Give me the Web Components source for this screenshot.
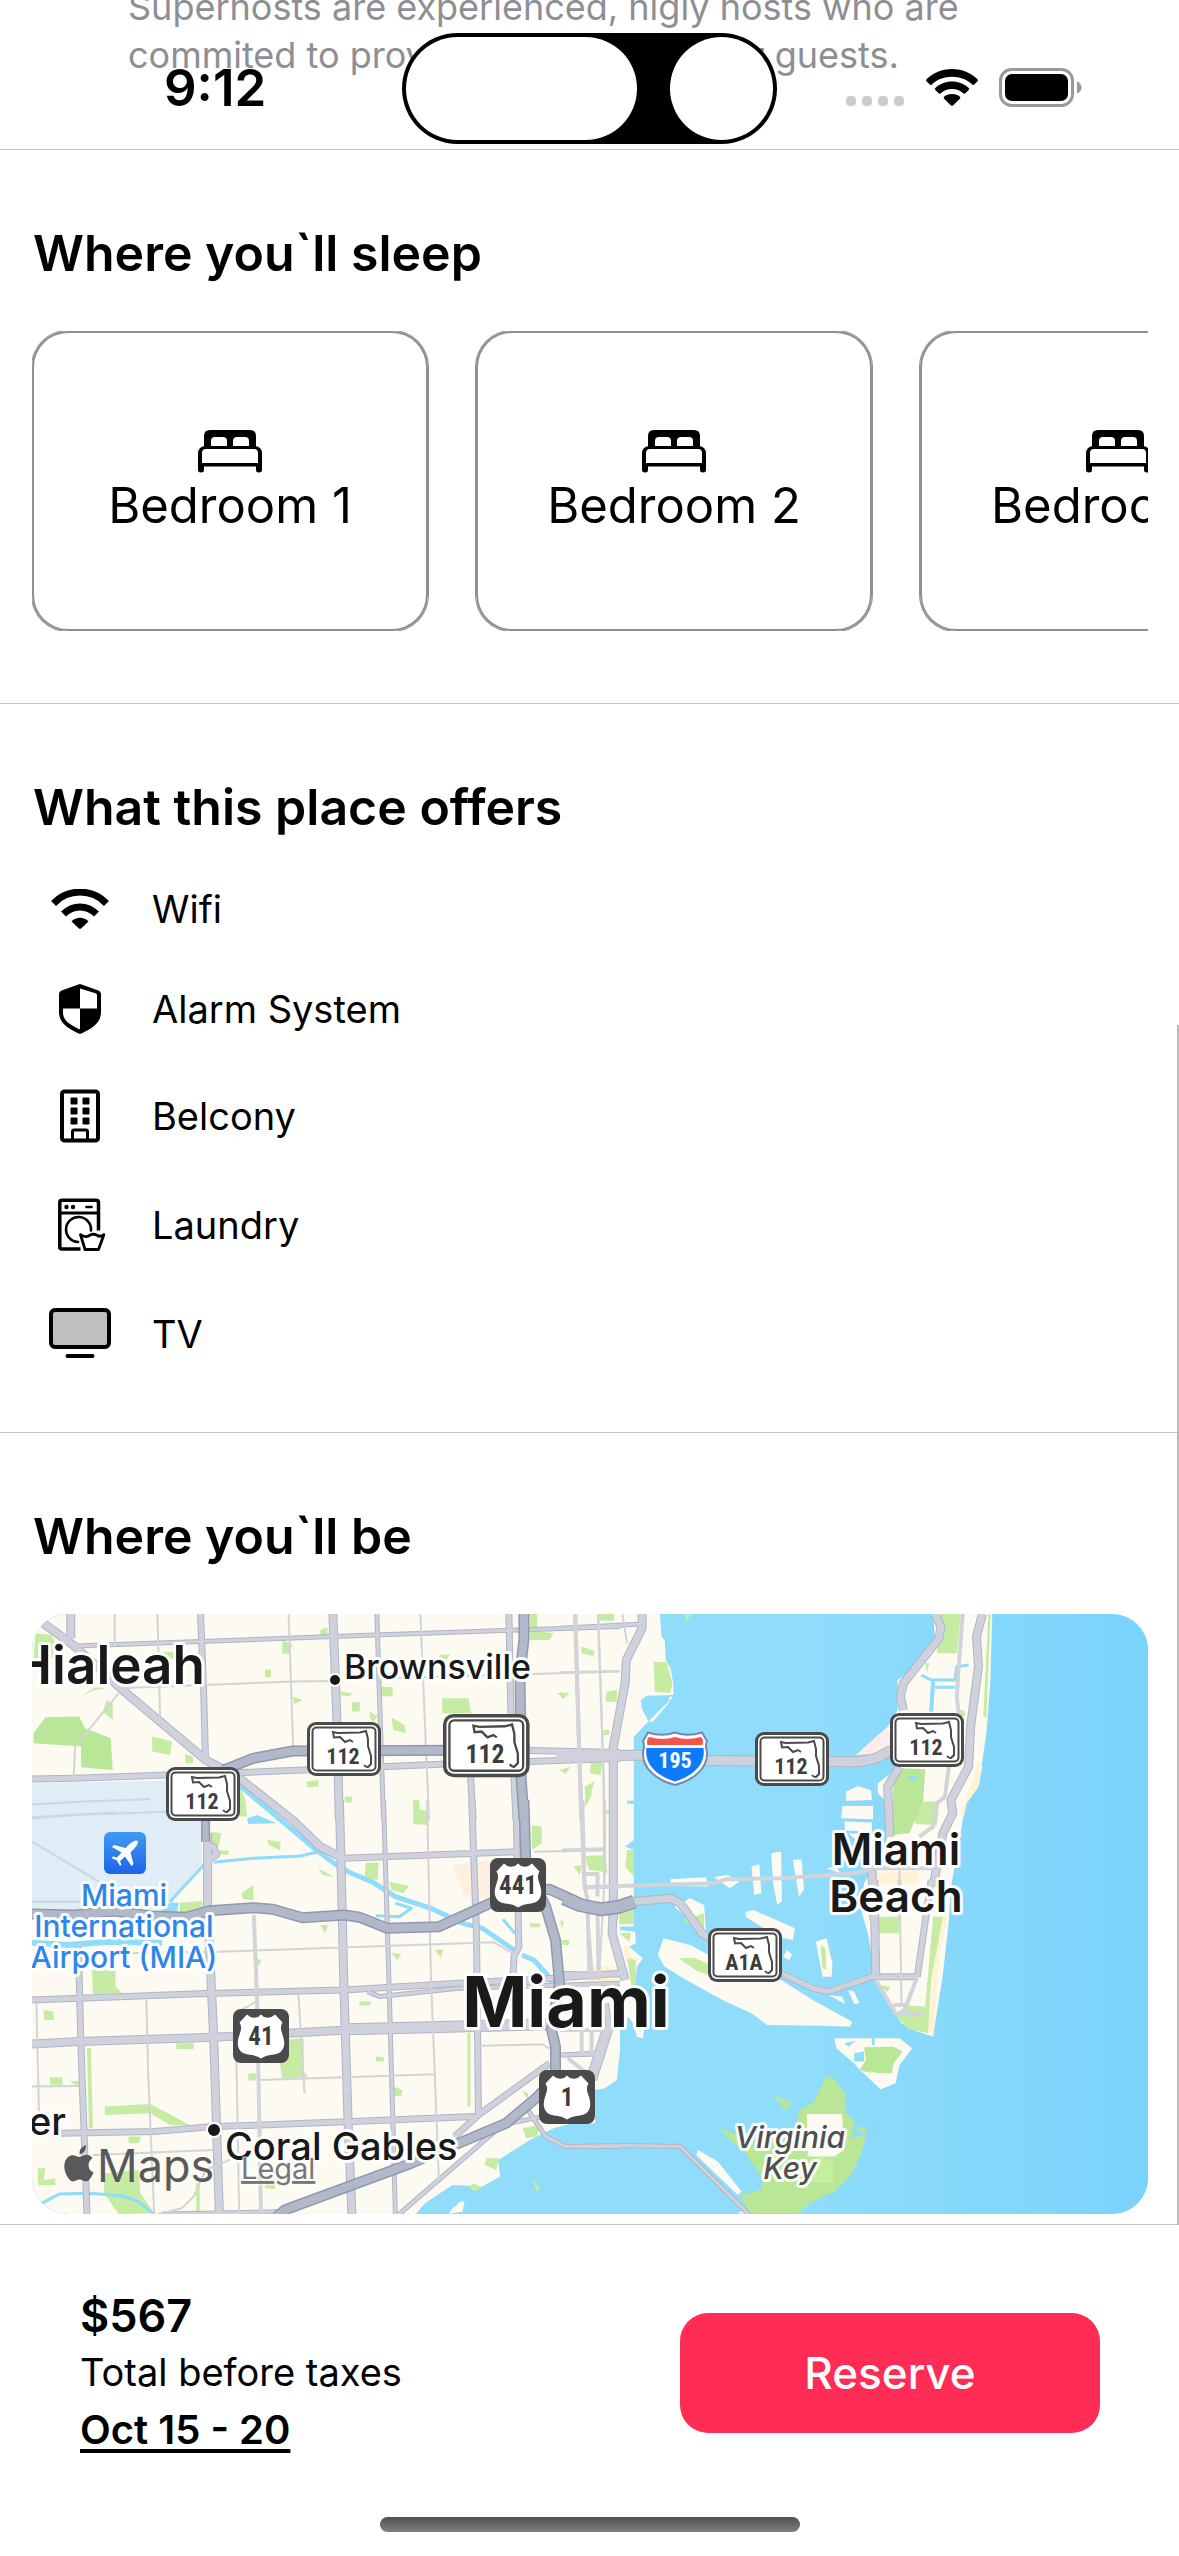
<!DOCTYPE html>
<html lang="en">
<head>
<meta charset="utf-8">
<meta name="viewport" content="width=device-width, initial-scale=1">
<title>Stay details</title>
<style>
  html, body { margin: 0; background: #fff; }
  body { font-family: Inter, "Liberation Sans", sans-serif; color: #000; }
</style>
</head>
<body>
<stay-page>
  <status-bar slot="status" time="9:12"></status-bar>
  <host-note>Superhosts are experienced, higly hosts who are<br>commited to providing great stays for guests.</host-note>
  <stay-section heading="Where you`ll sleep">
    <card-row>
      <bedroom-card>Bedroom 1</bedroom-card>
      <bedroom-card>Bedroom 2</bedroom-card>
      <bedroom-card>Bedroom 3</bedroom-card>
    </card-row>
  </stay-section>
  <stay-section heading="What this place offers">
    <amenity-list>
      <amenity-item icon="wifi">Wifi</amenity-item>
      <amenity-item icon="shield">Alarm System</amenity-item>
      <amenity-item icon="building">Belcony</amenity-item>
      <amenity-item icon="washer">Laundry</amenity-item>
      <amenity-item icon="tv">TV</amenity-item>
    </amenity-list>
  </stay-section>
  <stay-section heading="Where you`ll be" last>
    <area-map></area-map>
  </stay-section>
  <booking-bar slot="footer">
    <span slot="price">$567</span>
    <span slot="note">Total before taxes</span>
    <a slot="dates" href="#dates">Oct 15 - 20</a>
    <span slot="action">Reserve</span>
  </booking-bar>
</stay-page>

<script>
const define = (name, render) => customElements.define(name, class extends HTMLElement {
  constructor() {
    super();
    this.attachShadow({ mode: 'open' });
  }
  connectedCallback() {
    this.shadowRoot.innerHTML = render(this);
  }
});

define('stay-page', () => `
  <style>
    :host { display: flex; flex-direction: column; min-height: 100vh; position: relative; overflow: hidden; }
    main { position: relative; flex: 1; }
    .thumb { position: absolute; right: 0; bottom: 0; width: 2px; height: 1200px; background: #b9b9b9; }
  </style>
  <slot name="status"></slot>
  <main><slot></slot><div class="thumb"></div></main>
  <slot name="footer"></slot>`);

define('status-bar', el => `
  <style>
    :host { position: absolute; z-index: 2; top: 0; left: 0; right: 0; height: 144px; display: grid; grid-template-columns: 1fr 375px 1fr; padding-top: 33px; box-sizing: border-box; }
    .time { padding-left: 164px; padding-top: 24px; font-size: 51px; line-height: 62px; font-weight: 600; }
    .island { height: 111px; border-radius: 56px; background: #000; display: flex; justify-content: space-between; padding: 4px; box-sizing: border-box; }
    .wide { width: 231px; border-radius: 52px; background: #fff; }
    .round { width: 103px; border-radius: 52px; background: #fff; }
    .right { display: flex; justify-content: flex-end; padding: 35px 97px 0 0; }
  </style>
  <div class="time">${el.getAttribute('time')}</div>
  <div class="island"><div class="wide"></div><div class="round"></div></div>
  <div class="right">
    <svg width="236" height="40" viewBox="0 0 236 40" aria-hidden="true">
      <g fill="#ccc"><rect x="0" y="28" width="10" height="10" rx="4"/><rect x="16" y="28" width="10" height="10" rx="4"/><rect x="32" y="28" width="10" height="10" rx="4"/><rect x="48" y="28" width="10" height="10" rx="4"/></g>
      <path d="M106 1C96 1 87 4.800 80.500 11.200Q79.500 12.200 80.500 13.200L83.800 16.500Q84.800 17.500 85.800 16.500C91 11.600 98 8.800 106 8.800S121 11.600 126.200 16.500Q127.200 17.500 128.200 16.500L131.500 13.200Q132.500 12.200 131.500 11.200C125 4.800 116 1 106 1ZM106 13.500C99.500 13.500 93.500 16 89.300 19.900Q88.300 20.900 89.300 21.900L92.700 25.200Q93.700 26.200 94.700 25.200C97.700 22.700 101.600 21.100 106 21.100S114.300 22.700 117.300 25.200Q118.300 26.200 119.300 25.200L122.700 21.900Q123.700 20.900 122.700 19.900C118.500 16 112.500 13.500 106 13.500ZM106 26C102.800 26 100 27.100 98.100 28.700Q97.100 29.700 98.100 30.700L105 37.500Q106 38.400 107 37.500L113.900 30.700Q114.900 29.700 113.900 28.700C112 27.100 109.200 26 106 26Z"/>
      <rect x="154.500" y="1.500" width="72" height="36" rx="11" fill="none" stroke="#999" stroke-width="3"/>
      <rect x="159" y="6" width="63" height="27" rx="7"/>
      <path d="M231 13.500C237 15.500 237 23.500 231 25.500Z" fill="#999"/>
    </svg>
  </div>`);

define('host-note', () => `
  <style>
    :host { display: block; margin-top: -17px; padding: 0 96px 70px 128px; border-bottom: 1px solid #c2c2c2; font-size: 36px; line-height: 48px; color: #8e8e93; }
  </style><slot></slot>`);

define('stay-section', el => `
  <style>
    :host { display: block; padding: 73px 31px 72px 32px; border-bottom: 1px solid #c2c2c2; }
    :host([last]) { padding-bottom: 10px; }
    h2 { margin: 0 0 48px; padding-left: 1px; font-size: 50px; line-height: 60px; font-weight: 600; }
  </style>
  <h2>${el.getAttribute('heading')}</h2><slot></slot>`);

define('card-row', () => `
  <style>:host { display: flex; gap: 48px; overflow: hidden; }</style><slot></slot>`);

define('bedroom-card', () => `
  <style>
    :host { flex: 0 0 396px; height: 300px; display: flex; flex-direction: column; align-items: center; justify-content: center; border-radius: 36px; box-sizing: border-box; padding-top: 6px;
      box-shadow: inset 0 0 0 2px #8e8e93, 0 0 0 1px #8e8e93; font-size: 49px; line-height: 66px; }
  </style>
  <svg width="64" height="43" viewBox="0 0 64 43" aria-hidden="true">
    <path fill-rule="evenodd" d="M6 17V6Q6 0 12 0H52Q58 0 58 6V17ZM13 16H29V11Q29 7 25 7H17Q13 7 13 11ZM35 16H51V11Q51 7 47 7H39Q35 7 35 11Z"/>
    <path fill-rule="evenodd" d="M0 24Q0 16 8 16H56Q64 16 64 24V40Q64 42.500 61 42.500T58 40V36.500H6V40Q6 42.500 3 42.500T0 40ZM4 33H60V23Q60 19 56 19H8Q4 19 4 23Z"/>
  </svg>
  <slot></slot>`);

define('amenity-list', () => `
  <style>:host { display: flex; flex-direction: column; gap: 55px; margin-top: 52px; }</style><slot></slot>`);

const icons = {
  wifi: `<svg width="58" height="40" viewBox="0 0 58 40"><g fill="none" stroke="#000" stroke-width="7"><path d="M2.500 14.500C17-.700 41-.700 55.500 14.500"/><path d="M12.500 25C22 15.500 36 15.500 45.500 25"/></g><path d="M20.500 32.500C25 27.500 33 27.500 37.500 32.500L30 39.500Q29 40.400 28 39.500Z"/></svg>`,
  shield: `<svg width="42" height="50" viewBox="0 0 42 50"><path fill-rule="evenodd" d="M19.500.500Q21-.300 22.500.500L39.500 6.500Q42 7.500 42 10V28C42 39 33 44.500 22.500 49.500Q21 50.200 19.500 49.500C9 44.500 0 39 0 28V10Q0 7.500 2.500 6.500ZM21 4.500V24.500H38V11Q38 9.700 36.500 9.200ZM21 24.500H4V28C4 37 11 40.500 21 45.500Z"/></svg>`,
  building: `<svg width="40" height="54" viewBox="0 0 40 53"><rect x="2" y="2" width="36" height="49" rx="2.500" fill="none" stroke="#000" stroke-width="4"/><g><rect x="10.500" y="8" width="7" height="7" rx="1"/><rect x="22.500" y="8" width="7" height="7" rx="1"/><rect x="10.500" y="18" width="7" height="7" rx="1"/><rect x="22.500" y="18" width="7" height="7" rx="1"/><rect x="10.500" y="28" width="7" height="7" rx="1"/><rect x="22.500" y="28" width="7" height="7" rx="1"/></g><path d="M12.500 50V42Q12.500 40.500 14 40.500H26Q27.500 40.500 27.500 42V50" fill="none" stroke="#000" stroke-width="3"/></svg>`,
  washer: `<svg width="50" height="54" viewBox="-3 0 50 53"><g fill="none" stroke="#000" stroke-width="3.500" stroke-linecap="round" stroke-linejoin="round"><path stroke-linecap="butt" d="M22.500 50.500H4Q1.800 50.500 1.800 48.500V4Q1.800 1.800 4 1.800H38Q40.500 1.800 40.500 4V32"/><path d="M2 14.500H40.500" stroke-width="3"/><path d="M20 43.500A12.500 12.500 0 1 1 33 32" stroke-width="2.600"/><path d="M22.500 36L27 51H40.500L46 36Q42.500 39 39 36.800Q34.500 34.500 31 37.200Q27 39.500 22.500 36Z" stroke-width="2.800"/><path d="M28.500 8.500H33.500" stroke-width="2.600"/></g><circle cx="8.500" cy="8.500" r="2.200"/><circle cx="15" cy="8.500" r="2.200"/></svg>`,
  tv: `<svg width="62" height="53" viewBox="0 0 62 53"><rect x="2" y="3" width="58" height="37" rx="4" fill="#bfbfbf" stroke="#000" stroke-width="4"/><rect x="16.500" y="47" width="29" height="4" rx="2"/></svg>`
};
define('amenity-item', el => `
  <style>
    :host { display: flex; align-items: center; gap: 24px; font-size: 38px; line-height: 40px; }
    .icon { flex: 0 0 96px; display: flex; justify-content: center; }
    svg { display: block; }
  </style>
  <span class="icon" aria-hidden="true">${icons[el.getAttribute('icon')]}</span><span><slot></slot></span>`);

define('booking-bar', () => `
  <style>
    :host { display: flex; flex-direction: column; align-items: center; background: #fff; padding: 62px 79px 24px 80px; }
    .row { align-self: stretch; display: flex; align-items: center; justify-content: space-between; margin-bottom: 59px; }
    .info { display: flex; flex-direction: column; align-items: flex-start; font-size: 38px; line-height: 57px; }
    .price { font-size: 45px; font-weight: 600; }
    ::slotted(a) { color: #000; font-size: 40px; font-weight: 600; text-decoration: underline; text-decoration-thickness: 4px; text-underline-offset: 5px; text-decoration-skip-ink: none; }
    button { width: 420px; height: 120px; border: 0; border-radius: 28px; background: #ff2d55; color: #fff; font-family: inherit; font-size: 44px; font-weight: 500; }
    .home { width: 420px; height: 15px; border-radius: 8px; background: linear-gradient(#505050, #808080); }
  </style>
  <div class="row">
    <div class="info"><span class="price"><slot name="price"></slot></span><slot name="note"></slot><slot name="dates"></slot></div>
    <button type="button"><slot name="action"></slot></button>
  </div>
  <div class="home"></div>`);

/* ---- Map data: four survey sheets, each with its own origin and unit ---- */
const sheets = {
  nw: [0, 1400, .3954, .3333], sw: [0, 1800, .3954, .3333],
  ne: [560, 1600, .3948, .3333], se: [560, 1880, .3948, .3333]
};
const trace = (sheet, pts, close) => {
  const [ox, oy, sx, sy] = sheets[sheet];
  return 'M' + pts.split(' ').map(p => {
    const [x, y] = p.split(',').map(Number);
    return (ox + x * sx).toFixed(1) + ' ' + (oy + y * sy).toFixed(1);
  }).join('L') + (close ? 'Z' : '');
};
const area = (sheet, fill, list) => `<path fill="${fill}" d="${list.split('|').map(s => trace(sheet, s.trim(), true)).join('')}"/>`;
const line = (sheet, color, width, list) => `<path fill="none" stroke-linejoin="round" stroke="${color}" stroke-width="${width}" d="${list.split('|').map(s => trace(sheet, s.trim())).join('')}"/>`;

const LAND = '#fcfaf1', GREEN = '#c5eca2', PARK = '#b9e697', SEA = '#8fdcfb', SAND = '#fff3d4';
const areas = [
  area('sw', LAND, '1510,-600 1568,-700 1568,750 1560,840 1530,865 1505,870 1505,970 1440,972 1400,985 1340,1020 1260,1080 1265,1130 1220,1160 1145,1155 1100,1190 1075,1210 1045,1250 60,1250 60,-600'),
  area('ne', LAND, '-40,30 253,42 257,110 265,120 268,180 280,205 287,250 287,285 220,287 205,300 207,325 225,365 235,365 275,310 277,290 287,290 215,375 187,410 187,720 165,740 187,750 187,980 -40,980'),
  area('se', LAND, '-40,100 187,100 187,133 150,135 150,150 190,155 192,190 175,200 210,235 195,260 190,320 220,380 210,475 195,470 185,430 172,410 165,440 145,450 140,590 95,620 -40,640'),
  area('ne', LAND, '945,42 1095,42 1090,250 1080,400 1060,560 1030,610 1020,660 1010,740 990,860 985,960 970,1120 945,1310 905,1295 865,1270 800,1140 780,1000 765,940 770,850 810,780 835,690 830,610 805,580 805,550 850,510 840,440 750,465 830,380 855,330 855,240 905,200 905,180 950,120 | 725,575 755,558 788,572 790,600 725,603 | 715,618 793,618 793,658 712,655 | 720,665 790,668 790,695 722,692 | 730,700 800,705 800,740 770,740 | 485,800 505,793 510,880 492,885 | 535,760 560,755 562,905 550,915 540,850 | 590,780 612,778 618,870 605,890 | 280,838 370,832 375,860 280,858 | 390,832 420,825 460,840 430,865 | 675,805 700,798 710,820'),
  area('ne', SAND, '1062,480 1070,500 1060,560 1030,610 1020,660 1015,640 1040,560 | 803,818 908,815 908,850 803,850'),
  area('ne', '#ffeceb', '750,465 830,380 840,440 800,462'),
  area('ne', GREEN, '965,42 1015,42 1005,160 955,160 | 895,605 960,605 955,675 900,672 | 925,190 935,190 930,220 | 1085,42 1091,42 1080,350 1072,350 | 237,185 270,187 285,250 280,278 240,275 | 95,42 135,42 135,62 97,60 | 55,140 88,155 80,165 55,160 | 0,275 20,285 5,297 | 118,275 145,270 140,305 115,305 | 65,768 115,765 120,820 70,800 | 170,750 187,750 187,830 165,800 | 62,560 88,545 75,590 65,598 | 80,500 105,500 100,525 | 315,42 333,45 320,62 | 35,800 55,795 50,825 | 1010,330 1025,332 1025,350 1010,345 | 110,390 125,390 125,405 110,405 | 115,630 125,630 125,640 115,640'),
  area('ne', PARK, '845,540 865,505 925,508 920,600 885,700 840,705'),
  area('ne', SEA, '880,528 905,530 900,545 888,540'),
  area('se', LAND, '290,80 330,55 365,75 370,155 350,145 | 470,95 490,90 595,145 590,180 550,170 470,110 | 575,210 588,225 580,240 565,230 | 648,185 675,175 690,250 688,290 665,290 | 248,225 262,175 330,195 400,240 560,300 640,360 740,425 735,440 665,437 525,435 485,400 420,365 320,300 265,260 | 680,345 715,350 722,372 | 730,330 745,335 758,370 745,372 | 695,475 860,475 892,505 860,555 850,610 812,628 760,570 745,550 700,505 | 350,810 400,845 460,935 450,945 345,825 | 450,1001 465,990 490,1001'),
  area('se', SAND, '80,258 150,260 145,305 70,300 | 160,195 175,198 178,230 210,240 165,238 | 960,110 980,110 960,230 945,470 930,450 945,300'),
  area('se', GREEN, '310,120 365,100 365,148 340,140 | 660,195 672,205 675,270 665,265 | 300,235 340,233 390,260 400,290 350,275 | 945,110 970,110 940,300 932,460 880,445 850,405 875,375 925,380 | 805,110 860,110 858,160 808,160 | 150,80 187,75 187,133 150,133 | 170,235 192,240 192,320 180,315 | 150,160 180,158 175,185 | 0,120 10,125 5,150 | 805,315 835,320 830,335'),
  area('se', PARK, '675,590 690,592 722,640 725,700 750,730 735,755 775,735 770,800 740,880 695,935 640,965 600,1001 480,1001 455,945 510,930 515,900 470,820 440,790 400,742 440,760 500,790 600,740 605,690 640,670 | 540,645 588,670 570,690 | 770,502 845,500 868,515 845,550 840,580 790,580 758,570 775,540'),
  area('se', '#c4f09c', '600,860 660,830 695,850 690,910 605,905'),
  area('se', LAND, '625,702 715,702 718,810 695,830 628,830 | 785,575 830,585 815,600 800,595'),
  area('se', SEA, '720,490 750,482 730,500 | 745,520 770,515 770,545 745,545 | 790,475 797,475 797,495 790,495 | 660,747 672,747 672,756 660,756 | 755,745 735,775 770,765'),
  area('nw', PARK, '115,952 200,950 215,985 280,1015 285,1110 205,1102 205,1040 85,1030 85,1000'),
  area('nw', GREEN, '90,700 130,705 150,750 130,775 85,775 | 385,1010 435,1025 430,1065 385,1055 | 715,720 740,735 730,762 713,760 | 1118,895 1185,895 1192,940 1118,940 | 1340,642 1358,642 1358,695 1400,700 1390,720 1340,720 | 1510,642 1553,642 1553,660 1515,662 | 965,860 993,862 993,890 965,888 | 990,952 1022,975 1028,1000 995,990 | 468,1062 488,1070 488,1090 470,1090 | 890,907 910,907 910,935 890,935 | 670,810 685,808 685,832 670,832 | 860,875 890,880 885,890 862,886 | 810,690 828,682 828,705 810,705 | 1110,765 1138,763 1130,778 1112,778 | 1470,740 1505,755 1500,768 1472,760 | 1410,880 1440,878 1425,897 | 1530,890 1560,870 1560,908 | 775,1145 805,1140 805,1160 778,1162 | 872,1190 890,1190 890,1208 872,1208 | 1045,1200 1060,1200 1062,1230 1085,1232 1083,1275 1045,1272 | 1480,1195 1500,1145 1495,1190 1478,1225 | 1495,1085 1522,1080 1520,1125 1492,1120 | 608,1160 620,1200 625,1250 605,1250 | 1415,1110 1443,1100 1430,1122 | 740,890 765,900 745,912 | 415,755 443,757 440,775 418,778 | 205,890 240,862 270,865 235,872 | 270,900 285,910 285,960 260,935 | 935,935 955,950 945,965 935,955'),
  area('sw', '#e0ecf6', '81,-50 510,-60 510,190 430,310 420,332 81,332'),
  area('sw', '#fdf0e0', '1145,195 1240,180 1240,290 1175,290'),
  area('sw', SAND, '1485,500 1568,498 1568,545 1480,545 | 165,430 185,430 185,450 170,448'),
  area('sw', SEA, '395,350 430,308 452,308 445,352 | 625,55 650,45 700,70 628,72'),
  area('sw', GREEN, '455,308 510,303 515,330 480,350 455,352 | 233,510 292,512 292,560 310,580 235,582 | 715,720 768,715 768,815 780,832 713,835 708,790 | 265,920 380,912 480,975 430,975 380,940 265,945 | 263,1120 350,1110 355,1180 390,1240 300,1242 263,1180 | 220,745 230,745 235,985 225,985 | 1182,700 1190,700 1190,920 1182,920 | 445,730 490,730 490,747 447,747 | 1345,75 1370,80 1370,130 1345,150 | 1485,170 1530,170 1530,215 1490,210 | 925,188 958,188 955,240 922,235 | 985,245 1035,258 1020,280 990,270 | 610,280 640,255 642,300 615,298 | 125,832 158,832 158,855 128,855 | 175,845 200,843 198,858 | 810,375 830,375 822,400 | 535,95 560,100 550,150 580,152 575,165 537,160 | 645,475 660,480 655,500 | 1100,450 1120,448 1115,475 | 990,460 1015,462 1005,480 | 908,605 938,605 935,617 910,617 | 995,860 1018,870 1015,890 998,888 | 628,820 648,820 648,842 628,842 | 1322,985 1362,975 1360,1010 1330,1015 | 95,1105 115,1105 110,1140 140,1135 140,1155 97,1155 | 495,1150 505,1150 505,1235 497,1235 | 670,1140 697,1145 695,1168 670,1165 | 110,630 135,635 137,660 112,660 | 325,1010 357,1010 350,1030 325,1030 | 1375,370 1395,362 1393,385 | 1420,420 1440,420 1438,435 1420,434 | 950,770 972,772 970,785 952,785 | 1320,870 1335,880 1335,900 | 675,120 710,125 708,150 680,135 | 805,205 845,230 815,225 | 1340,370 1365,370 1365,382 1342,382 | 1230,1075 1262,1075 1255,1110 1225,1095 | 1185,1160 1200,1150 1218,1165 1200,1175 | 1345,1135 1365,1165 1360,1180 | 1450,200 1470,200 1468,220'),
  area('sw', LAND, '1165,1205 1175,1205 1170,1235 1135,1242 1145,1225'),
  line('nw', '#c9d8e4', 2, '81,1214 210,1205 380,1198 | 81,1252 290,1238'),
  line('sw', '#c9d8e4', 2, '81,55 190,45 420,35 | 81,125 250,245 | 81,305 205,305'),
  line('sw', SEA, 5, '600,-50 800,150 845,190 880,215 940,245 1000,290 1090,325 1170,370 1220,385 1300,450 | 1320,465 1350,480 1385,525 1400,555'),
  line('sw', SEA, 3, '540,187 640,175 760,168 805,155 | 515,195 430,305 | 950,347 1010,350 1040,325 1000,310 | 105,1210 150,1182 230,1180 310,1188 350,1205 392,1245 | 1272,358 1302,400'),
  line('sw', SEA, 6, '81,428 170,435 280,425 410,428'),
  line('ne', SEA, 3, '915,225 940,240 1000,240 1005,200 1035,195 | 950,262 1000,262 | 170,607 190,607'),
  line('ne', SEA, 4, '945,245 940,335')
].join('');

/* class: [inner colour, casing colour] */
const kinds = { t: ['#d3d3da', null], m: ['#cfd1dc', '#b0b6c6'], h: ['#b1b8c9', '#8f98ae'] };
const roads = [
  ['nw','t',2,'300,865 740,845 850,843 | 960,835 1568,815 | 290,642 290,740 | 398,642 405,950 | 730,642 742,1060 | 1063,642 1085,1260 | 1512,642 1530,1260 | 300,880 190,1040 186,1140'],
  ['sw','t',2,'1080,0 1090,540 1100,830 1110,1140 | 1350,155 1530,150 | 320,460 555,455 1250,427 1310,470 | 660,840 1100,823 | 81,860 200,858 | 235,1065 540,1050 | 370,600 375,830 390,1242 | 598,780 605,1242 | 755,585 770,880 | 92,610 100,1000 | 1475,0 1480,230 1500,540 | 1530,0 1530,210 1515,540 | 1475,222 1510,222 | 460,1225 490,1190 520,1110 600,1070 | 400,1242 460,1225 | 1200,738 1370,733 1390,745 | 610,630 655,600'],
  ['ne','t',2,'97,42 110,500 112,850 | 0,217 150,213 | 158,42 170,130 | 860,800 860,960'],
  ['se','t',2,'860,0 865,370 | 20,320 100,315'],
  ['nw','t',4,'1455,642 1470,1260'],
  ['sw','t',4,'642,345 650,590 660,1242 | 1480,262 1568,260'],
  ['ne','t',4,'38,42 50,500 62,860 70,900 | 1020,42 1010,200 1005,290 1010,340 | 985,500 975,590 955,610 945,680 910,710 | 60,862 150,858 390,850 420,838 560,835 750,820 790,805 960,805 | 5,752 110,748 | 62,822 95,822 95,890'],
  ['se','t',4,'70,90 75,300 | 95,100 98,300 | 800,300 850,400 920,402 | 905,290 870,400 | 845,375 880,375 | 0,450 120,450 | 20,535 90,600 | 55,450 55,520 | 80,450 80,520 | 860,0 860,100'],
  ['nw','m',5,'190,738 840,710 1310,690 1568,680 | 953,642 970,1260'],
  ['ne','m',5,'0,85 208,72'],
  ['sw','m',5,'970,0 985,600 1000,1242 | 930,575 960,590 1160,565 1568,550 | 1425,765 1510,762 | 1370,950 1270,975 1010,1242 | 1335,930 1380,1010 1430,1040 1568,1040 | 410,1242 720,1235'],
  ['se','m',5,'0,280 160,285 | 0,525 90,520 | 10,800 170,797 305,800 480,1005'],
  ['nw','m',7,'81,1137 190,1135 420,1125 610,1118 1130,1092 1340,1085 1568,1075 | 507,642 515,870 520,1090 | 1190,1130 1197,1260 | 1287,642 1292,940 1305,1260 | 1340,1052 1568,1058'],
  ['sw','m',7,'520,130 540,140 548,165 525,180 | 1193,0 1205,400 1210,940 | 1305,0 1312,440 1300,470 1298,520 | 870,175 1310,155 | 81,600 200,595 540,580 870,570 1160,550 1400,535 1568,520 | 155,1000 390,995 540,980 660,975 890,965 1200,950 | 198,440 205,750 220,1242 | 1390,790 1210,945 1150,1010 | 1530,690 1495,820'],
  ['se','m',7,'560,280 640,325 680,335 790,290 905,290 | 940,0 905,290 | 115,370 125,450 85,600'],
  ['nw','m',9,'179,642 179,715 | 110,670 190,740 310,870 520,1080 600,1130 750,1270 | 842,642 852,960 858,1260'],
  ['sw','m',9,'740,60 810,140 860,170 | 858,0 862,160 870,570 880,960 890,1242 | 525,100 525,320 540,700 555,1242 | 81,732 200,725 540,712 880,690'],
  ['sw','m',12,'880,688 1160,680 1400,672'],
  ['ne','m',9,'208,42 208,85 168,180 165,250 135,440 135,860 135,960 | 950,42 965,80 960,115 870,250 862,290 870,330 | 1070,42 1055,110 1060,200 1040,380 1035,500 990,600 995,640 970,700 945,860 | 860,500 830,560 835,710 | 790,800 795,960'],
  ['se','m',9,'795,0 800,290 | 135,90 132,160 165,300 | 180,65 280,55 305,70 360,160 390,180'],
  ['ne','m',11,'-10,470 208,465 230,480 760,485 800,475 840,450'],
  ['sw','h',9,'520,60 520,125'],
  ['nw','h',11,'565,1110 640,1075 740,1053 1340,1050'],
  ['nw','h',11,'1325,642 1325,720 1315,820 1318,1130 1325,1260'],
  ['sw','h',11,'1325,0 1330,200 1380,320 1405,420 1415,550 1395,690 1405,740 1405,830 1360,890 1280,970 1160,1030 1040,1090 720,1230 700,1250'],
  ['sw','h',11,'81,342 190,345 290,333 380,348 470,352 530,332 640,323 690,328 765,353 870,345 910,352 980,385 1110,380 1240,310 1310,275 1390,268 1440,295 1500,328'],
  ['se','h',14,'10,55 50,75 105,88 150,80 188,65']
];
const casing = roads.filter(r => r[1] === 'm').map(([s, k, w, p]) => line(s, kinds[k][1], w, p)).join('');
const fillRoads = roads.filter(r => r[1] !== 'h').map(([s, k, w, p]) => line(s, kinds[k][0], k === 'm' ? w - 2 : w, p)).join('');
const highways = roads.filter(r => r[1] === 'h').map(([s, k, w, p]) => line(s, kinds.h[1], w, p)).join('')
  + roads.filter(r => r[1] === 'h').map(([s, k, w, p]) => line(s, kinds.h[0], w - 3, p)).join('');

const stateRoad = (x, y, label, scale = 1) => `
  <g transform="translate(${x} ${y}) scale(${scale})">
    <rect width="74" height="54" rx="9" fill="#4a4a4a"/><rect x="3" y="3" width="68" height="48" rx="6" fill="#fff"/>
    <rect x="5.500" y="5.500" width="63" height="43" rx="4" fill="#fff" stroke="#4a4a4a" stroke-width="2"/>
    <path d="M46 20L43 18L38 20L33 15L27 15.500L26 10L31 11L53 10.500L59 9L61 17V24L64 34V42L61 45Q59 45.500 57 43" fill="none" stroke="#4a4a4a" stroke-width="2"/>
    <text class="road" x="36" y="42" font-size="22">${label}</text>
  </g>`;
const usRoute = (x, y, label) => `
  <g transform="translate(${x} ${y})">
    <rect width="56" height="54" rx="8" fill="#4a4a4a"/>
    <path d="M14 5.500Q18 9.500 22.500 8.500Q26 8 28 5.500Q30 8 33.500 8.500Q38 9.500 42 5.500L49.500 13.500Q46.500 18 49 24Q52 32 51 37Q49.500 44.500 41 45.500Q33 46 28 49.500Q23 46 15 45.500Q6.500 44.500 5 37Q4 32 7 24Q9.500 18 6.500 13.500Z" fill="#fff"/>
    <text class="road" x="28" y="36" font-size="25">${label}</text>
  </g>`;

define('area-map', () => `
  <style>
    :host { display: block; height: 600px; border-radius: 36px; overflow: hidden; background: ${SEA}; }
    svg { display: block; width: 100%; height: 100%; }
    text { font-family: Inter, "Liberation Sans", sans-serif; }
    .place text { fill: #191919; stroke: #fffffff0; stroke-width: 6px; stroke-linejoin: round; paint-order: stroke; font-weight: 500; }
    text.road { font-family: "Liberation Sans Narrow", "Roboto Condensed", Roboto, sans-serif; font-weight: 700; text-anchor: middle; fill: #3d3d3d; }
    .mid { text-anchor: middle; }
    a text { text-decoration: underline; }
  </style>
  <svg viewBox="32 1614 1116 600" preserveAspectRatio="xMidYMid slice" role="img" aria-label="Map of Miami">
    <defs>
      <linearGradient id="sea" x1="0" x2="1"><stop offset=".7" stop-color="#8fdcfb"/><stop offset="1" stop-color="#7ad3fc"/></linearGradient>
      <linearGradient id="air" x1="0" x2="0" y1="0" y2="1"><stop offset="0" stop-color="#3f9bf5"/><stop offset="1" stop-color="#1f63ea"/></linearGradient>
    </defs>
    <rect x="32" y="1614" width="1116" height="600" fill="url(#sea)"/>
    ${areas}${casing}${fillRoads}${highways}
    ${stateRoad(166, 1767, '112')}${stateRoad(307, 1722, '112')}${stateRoad(443, 1714, '112', 1.17)}
    ${stateRoad(755, 1732, '112')}${stateRoad(890, 1713, '112')}${stateRoad(708, 1928, 'A1A')}
    ${usRoute(490, 1858, '441')}${usRoute(233, 2009, '41')}${usRoute(539, 2070, '1')}
    <g transform="translate(642 1732)">
      <path d="M6 .500Q20 5 33 .500Q46 5 60 .500L65 9Q63 14 65 20C66 36 52 48 33 53C14 48 0 36 1 20Q3 14 1 9Z" fill="#fff" stroke="#7488b4" stroke-width="2"/>
      <path d="M5.500 13Q4 6 7.500 5Q21 9 33 5Q45 9 58.500 5Q62 6 60.500 13Z" fill="#f5544b"/>
      <path d="M4.500 16H61.500C64 33 50 44 33 49.500C16 44 2 33 4.500 16Z" fill="#0e7bff"/>
      <text class="road" x="33" y="36" font-size="22" style="fill:#fff">195</text>
    </g>
    <rect x="104" y="1832" width="42" height="42" rx="6" fill="url(#air)"/>
    <path d="M137.500 1841C139 1843 136 1847 130.500 1852.500L133.500 1864L131.500 1866L125 1856.500L120 1861L121.500 1864.500L120 1866L117 1860.500L111.500 1858L113 1856.500L117 1857.500L121.500 1852.500L112 1847L114 1845L125.500 1848C131 1842.500 135.500 1839.500 137.500 1841Z" fill="#fff"/>
    <g class="place">
      <text x="205" y="1684" font-size="53" text-anchor="end" style="font-weight:600">Hialeah</text>
      <text x="344" y="1679" font-size="34">Brownsville</text>
      <text x="225" y="2160" font-size="38">Coral Gables</text>
      <text x="29" y="2135" font-size="38">er</text>
      <g class="mid">
        <text x="566" y="2027" font-size="70" style="font-weight:700">Miami</text>
        <text x="896" y="1865" font-size="44" style="font-weight:600">Miami</text>
        <text x="896" y="1912" font-size="44" style="font-weight:600">Beach</text>
      </g>
      <g class="mid">
        <text x="124" y="1906" font-size="30" style="fill:#2e86ea">Miami</text>
        <text x="124" y="1937" font-size="30" style="fill:#2e86ea">International</text>
        <text x="124" y="1968" font-size="30" style="fill:#2e86ea">Airport (MIA)</text>
        <text x="790" y="2148" font-size="30" font-style="italic" style="fill:#505050">Virginia</text>
        <text x="790" y="2179" font-size="30" font-style="italic" style="fill:#505050">Key</text>
      </g>
    </g>
    <g fill="#191919" stroke="#fff" stroke-width="2"><circle cx="335" cy="1680" r="6"/><circle cx="214" cy="2130" r="7"/></g>
    <g fill="#595959">
      <path d="M86 2145Q86.500 2152.500 79.500 2154.500Q78.500 2148 86 2145ZM79 2157C82 2157 83.500 2154.800 87 2154.800Q90.500 2155 92.500 2158Q88 2161.500 88.500 2166Q89 2170.500 93.500 2172.500Q91.500 2178 88 2181C84.500 2182.500 82.500 2179.500 79.500 2179.500S74.500 2182.500 71 2181C65.500 2176.500 62.500 2167 65.500 2160.500C67.500 2156 72 2154.500 75 2155.800Z"/>
      <text x="97" y="2182" font-size="45">Maps</text>
    </g>
    <a href="#legal"><text x="241" y="2179" font-size="29" fill="#777" stroke="#ffffffa0" stroke-width="3" paint-order="stroke">Legal</text></a>
  </svg>`);
</script>
</body>
</html>
